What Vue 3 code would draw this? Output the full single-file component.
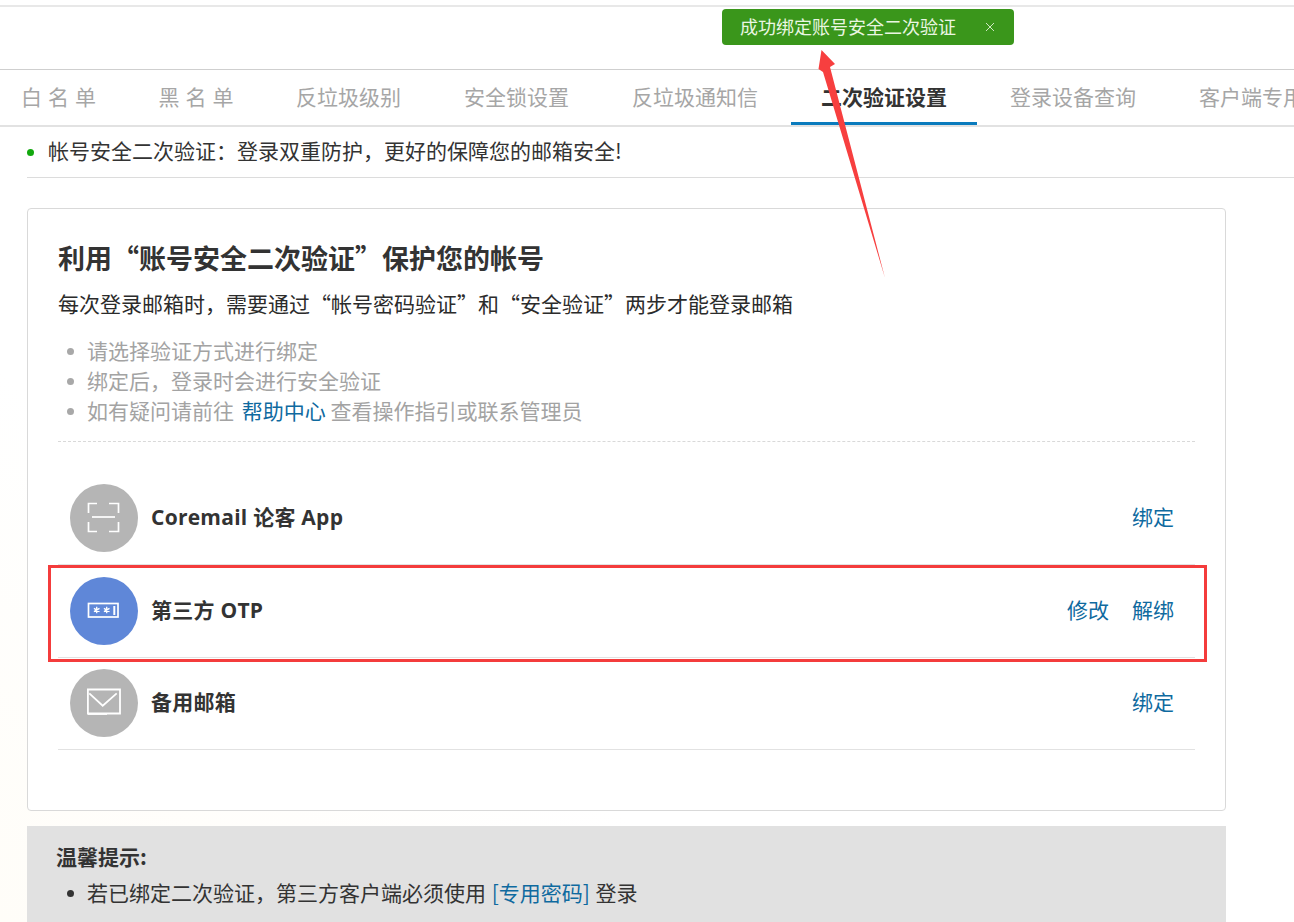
<script setup>
const tabs = [
  { label: '白名单', spaced: true },
  { label: '黑名单', spaced: true },
  { label: '反垃圾级别' },
  { label: '安全锁设置' },
  { label: '反垃圾通知信' },
  { label: '二次验证设置', active: true },
  { label: '登录设备查询' },
  { label: '客户端专用密码' }
]
const notes = ['请选择验证方式进行绑定', '绑定后，登录时会进行安全验证']
</script>

<template>
  <div class="page" lang="zh-CN">
    <div class="top-line"></div>
    <div class="tabs">
      <div
        v-for="t in tabs"
        :key="t.label"
        class="tab"
        :class="{ active: t.active, spaced: t.spaced }"
      >{{ t.label }}</div>
    </div>
    <main class="main">
      <div class="section-head"><i class="dot"></i>帐号安全二次验证：登录双重防护，更好的保障您的邮箱安全!</div>
      <section class="card">
        <h1 class="title">利用“账号安全二次验证”保护您的帐号</h1>
        <p class="sub">每次登录邮箱时，需要通过“帐号密码验证”和“安全验证”两步才能登录邮箱</p>
        <ul class="notes">
          <li v-for="n in notes" :key="n">{{ n }}</li>
          <li>如有疑问请前往 <a class="link help">帮助中心</a> 查看操作指引或联系管理员</li>
        </ul>
        <div class="rows">
          <div class="row">
            <span class="badge">
              <svg width="34" height="34" viewBox="0 0 34 34" fill="none" stroke="#fff" stroke-width="1.7">
                <path d="M1.5 12V2.5H10M22 2.5H31.5V12M1.5 21V30.5H10M22 30.5H31.5V21" />
                <path d="M5 16H28" />
              </svg>
            </span>
            <span class="name">Coremail 论客 App</span>
            <span class="actions"><a class="link">绑定</a></span>
          </div>
          <div class="row">
            <span class="badge blue">
              <svg width="34" height="34" viewBox="0 0 34 34" fill="none" stroke="#fff">
                <rect x="1.5" y="9.5" width="29.5" height="13.5" stroke-width="1.7" />
                <path d="M9.7 12.8v6.4M6.9 14.4l5.6 3.2M12.5 14.4l-5.6 3.2M19.7 12.8v6.4M16.9 14.4l5.6 3.2M22.5 14.4l-5.6 3.2" stroke-width="1.3" />
                <path d="M27.3 12v9" stroke-width="2" />
              </svg>
            </span>
            <span class="name">第三方 OTP</span>
            <span class="actions"><a class="link">修改</a><a class="link">解绑</a></span>
          </div>
          <div class="row">
            <span class="badge">
              <svg width="34" height="34" viewBox="0 0 34 34" fill="none" stroke="#fff" stroke-width="1.8">
                <path d="M0.9 3.5H33V27.5H0.9Z" />
                <path d="M2.3 7.3L15.7 19.7L29.7 7.3" />
                <path d="M0.9 28.4H20" stroke-width="1" />
              </svg>
            </span>
            <span class="name">备用邮箱</span>
            <span class="actions"><a class="link">绑定</a></span>
          </div>
        </div>
      </section>
      <section class="tips">
        <h2 class="tips-title">温馨提示:</h2>
        <ul class="tips-list">
          <li>若已绑定二次验证，第三方客户端必须使用 <a class="link pwd">[专用密码]</a> 登录</li>
        </ul>
      </section>
    </main>

    <div class="toast">
      <span class="toast-text">成功绑定账号安全二次验证</span>
      <svg class="close" width="10" height="10" viewBox="0 0 10 10" stroke="#cfe8c2" stroke-width="1"><path d="M1 1l8 8M9 1l-8 8" /></svg>
    </div>
    <div class="red-box"></div>
    <svg class="arrow" width="80" height="240" viewBox="0 0 80 240">
      <polygon points="12.5,0 26,14 21,17 76,228 14,22 9.5,19" fill="#f73f3f" />
    </svg>
  </div>
</template>

<style>
html, body { margin: 0; background: #fff; }
</style>

<style scoped>
.page {
  position: relative;
  width: 1294px;
  height: 922px;
  overflow: hidden;
  background: linear-gradient(to top right, #fffdf8, #fff 30%);
  color: #333;
  font-family: "Noto Sans CJK SC", "Noto Sans", sans-serif;
  font-size: 21px;
}
.top-line {
  height: 2px;
  margin-top: 5px;
  background: #e8e8e8;
}
.tabs {
  display: flex;
  gap: 3px;
  height: 55px;
  margin-top: 62px;
  padding-left: 21px;
  background: #fff;
  border-top: 1px solid #cfcfcf;
  border-bottom: 2px solid #e2e2e2;
  white-space: nowrap;
  overflow: hidden;
}
.tab {
  flex: none;
  padding: 0 30px;
  height: 55px;
  box-sizing: border-box;
  line-height: 52px;
  color: #a6a6a6;
}
.tab:first-child { padding-left: 0; }
.tab.spaced { letter-spacing: 6px; padding-right: 23.5px; }
.tab.active {
  color: #333;
  font-weight: 700;
  border-bottom: 3px solid #0a7bbd;
}
.main { padding-left: 27px; }
.section-head {
  display: flex;
  align-items: center;
  box-sizing: border-box;
  height: 51px;
  padding-bottom: 4px;
  border-bottom: 1px solid #dcdcdc;
  line-height: 46px;
}
.dot {
  width: 7px;
  height: 7px;
  margin: 5px 14px 0 0;
  border-radius: 50%;
  background: #12a80e;
}
.card {
  box-sizing: border-box;
  width: 1199px;
  height: 603px;
  margin-top: 30px;
  padding: 30px 30px 0;
  background: #fff;
  border: 1px solid #d9d9d9;
  border-radius: 4px;
}
.title {
  margin: 0;
  font-size: 27px;
  font-weight: 700;
  line-height: 38px;
}
.sub {
  margin: 11px 0 0;
  line-height: 30px;
  color: #2b2b2b;
}
.notes {
  margin: 17px 0 0;
  padding: 0 0 16px 29px;
  border-bottom: 1px dashed #d9d9d9;
  list-style: none;
  line-height: 30px;
  color: #a3a3a3;
}
.notes li::before,
.tips-list li::before {
  content: "";
  display: inline-block;
  width: 7px;
  height: 7px;
  margin: 0 13px 3px -20px;
  border-radius: 50%;
  background: #a8a8a8;
  vertical-align: middle;
}
.link { color: #0f6a9f; }
.help { margin-left: 3px; }
.pwd { margin: 0 1px; }
.rows { margin-top: 30px; }
.row {
  display: flex;
  align-items: center;
  height: 93px;
  box-sizing: border-box;
  padding: 0 21px 0 12px;
  border-bottom: 1px solid #e2e2e2;
}
.row:last-child { height: 92px; padding-bottom: 2px; }
.badge {
  display: flex;
  align-items: center;
  justify-content: center;
  width: 68px;
  height: 68px;
  border-radius: 50%;
  background: #b5b5b5;
  flex: none;
}
.badge.blue { background: #5f87d8; }
.name {
  margin: 0 0 4px 13px;
  font-family: "Open Sans", "Noto Sans CJK SC", sans-serif;
  font-weight: 700;
  letter-spacing: 0.25px;
}
.actions {
  display: flex;
  gap: 23px;
  margin: 0 0 4px auto;
}
.tips {
  box-sizing: border-box;
  width: 1199px;
  height: 110px;
  margin-top: 15px;
  padding: 14px 30px 0;
  background: #e1e1e1;
}
.tips-title {
  margin: 0 0 0 -1px;
  font-size: 21px;
  line-height: 32px;
  font-weight: 700;
}
.tips-list {
  margin: 4px 0 0;
  padding-left: 30px;
  list-style: none;
  line-height: 32px;
}
.tips-list li::before { background: #333; }
.toast {
  position: absolute;
  left: 722px;
  top: 9px;
  display: flex;
  align-items: center;
  box-sizing: border-box;
  width: 292px;
  height: 36px;
  padding-left: 18px;
  border-radius: 4px;
  background: #3a961b;
  color: #eaf6e2;
  font-size: 18px;
}
.toast-text { margin-bottom: 2px; }
.close { margin-left: 29px; }
.red-box {
  position: absolute;
  left: 48px;
  top: 565px;
  width: 1159px;
  height: 97px;
  box-sizing: border-box;
  border: 3px solid #f43c3c;
}
.arrow {
  position: absolute;
  left: 809px;
  top: 50px;
}
</style>
